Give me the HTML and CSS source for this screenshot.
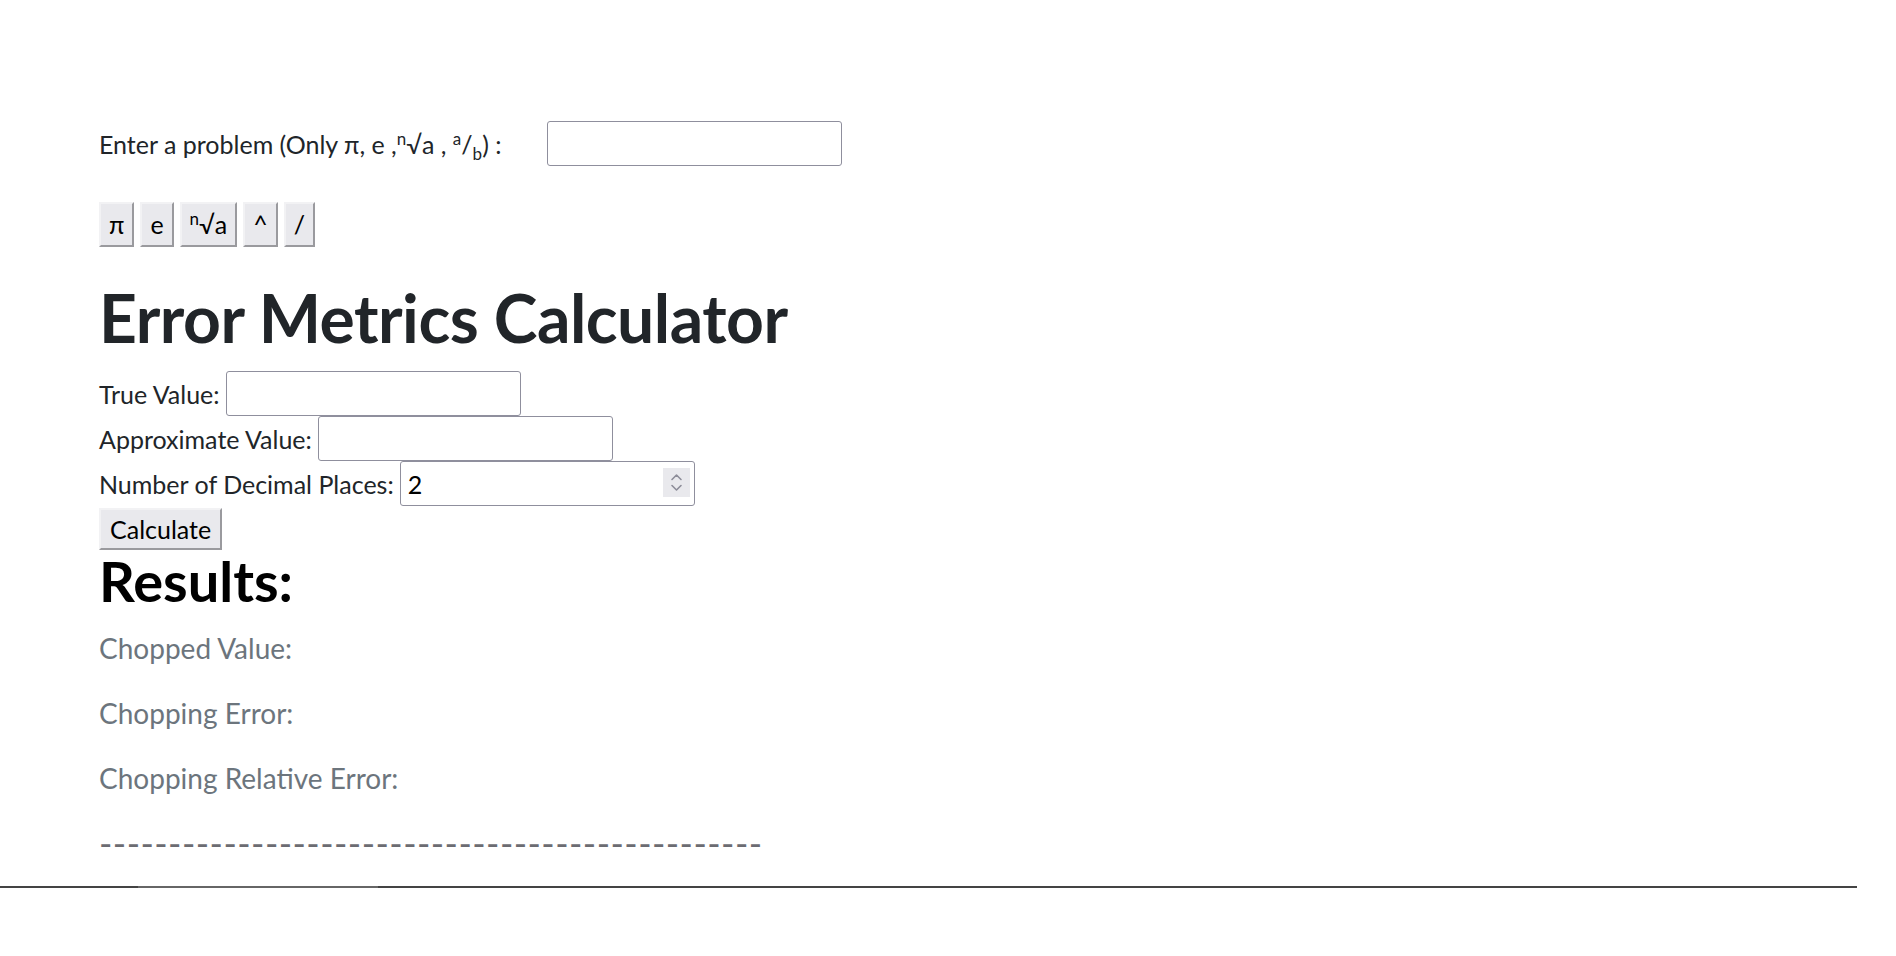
FILE: index.html
```html
<!DOCTYPE html>
<html lang="en">
<head>
<meta charset="utf-8">
<title>Error Metrics Calculator</title>
<link rel="stylesheet" href="styles.css">
</head>
<body>
<div class="page">
  <div class="problem">
    <label class="problem-label" for="problem">Enter a problem (Only π, e ,<sup>n</sup>√a , <sup>a</sup>/<sub>b</sub>) :</label>
    <input class="inp" id="problem" type="text">
  </div>
  <div class="keys">
    <button class="key">π</button>
    <button class="key">e</button>
    <button class="key"><sup>n</sup>√a</button>
    <button class="key">^</button>
    <button class="key">/</button>
  </div>
  <h1 class="title">Error Metrics Calculator</h1>
  <div class="row">
    <label for="tv">True Value:</label>
    <input class="inp" id="tv" type="text">
  </div>
  <div class="row">
    <label for="av">Approximate Value:</label>
    <input class="inp" id="av" type="text">
  </div>
  <div class="row">
    <label for="dp">Number of Decimal Places:</label>
    <span class="num-wrap">
      <input class="inp num" id="dp" type="number" value="2">
      <span class="spin">
        <svg width="27" height="29" viewBox="0 0 27 29">
          <path d="M9 11.5 L13.5 7 L18 11.5" fill="none" stroke="#8d8d99" stroke-width="1.6" stroke-linecap="round" stroke-linejoin="round"/>
          <path d="M9 17.5 L13.5 22 L18 17.5" fill="none" stroke="#8d8d99" stroke-width="1.6" stroke-linecap="round" stroke-linejoin="round"/>
        </svg>
      </span>
    </span>
  </div>
  <button class="key calc">Calculate</button>
  <h2 class="results-title">Results:</h2>
  <div class="results">
    <p class="res">Chopped Value:</p>
    <p class="res">Chopping Error:</p>
    <p class="res">Chopping Relative Error:</p>
    <p class="res dashes">------------------------------------------------</p>
  </div>
</div>
<div class="bar">
  <span class="bar-a"></span>
  <span class="bar-b"></span>
  <span class="bar-c"></span>
</div>
</body>
</html>
```
FILE: styles.css
```css
html, body {
  margin: 0;
  padding: 0;
  background: #ffffff;
}

body {
  font-family: Lato, "Noto Sans", "DejaVu Sans", sans-serif;
  color: #212529;
}

.page {
  padding: 121px 0 0 99px;
}

.problem {
  display: flex;
  align-items: center;
  height: 45px;
  font-size: 25px;
}

.problem-label {
  margin-right: 46px;
}

sup, sub {
  font-size: 0.68em;
  line-height: 0;
}

.inp {
  box-sizing: border-box;
  width: 295px;
  height: 45px;
  margin: 0;
  border: 1px solid #8f8f9d;
  border-radius: 3px;
  padding: 0 7px;
  font-family: Lato, "Noto Sans", sans-serif;
  font-size: 25px;
  color: #000;
  background: #fff;
}

.keys {
  display: flex;
  gap: 6px;
  margin-top: 36px;
}

.key {
  margin: 0;
  font-family: Lato, "Noto Sans", "DejaVu Sans", sans-serif;
  font-size: 25px;
  line-height: 31px;
  padding: 5px 8px;
  border: 2px solid;
  border-color: #f2f2f4 #9a9a9e #9a9a9e #f2f2f4;
  border-radius: 0;
  background: #e9e9ed;
  color: #000;
}

.title {
  margin: 30px 0 12px;
  font-size: 66px;
  letter-spacing: -0.5px;
  line-height: 82px;
  font-weight: 700;
  color: #212529;
}

.row {
  display: flex;
  align-items: center;
  gap: 6px;
  height: 45px;
  font-size: 25px;
}

.num-wrap {
  position: relative;
  display: inline-block;
  height: 45px;
}

.num {
  -moz-appearance: textfield;
  appearance: textfield;
}

.num::-webkit-inner-spin-button,
.num::-webkit-outer-spin-button {
  -webkit-appearance: none;
  margin: 0;
}

.spin {
  position: absolute;
  top: 7px;
  right: 5px;
  width: 27px;
  height: 29px;
  background: #e9e9ed;
  display: flex;
}

.calc {
  margin-top: 2px;
  line-height: 28px;
  padding: 5px 9px;
}

.results-title {
  margin: 0;
  font-size: 56px;
  line-height: 1.1;
  font-weight: 700;
  color: #000;
}

.results {
  display: flex;
  flex-direction: column;
  gap: 32px;
  margin-top: 20px;
}

.res {
  margin: 0;
  font-size: 28px;
  line-height: 33px;
  color: #6c757d;
}

.dashes {
  font-size: 36px;
  letter-spacing: 0.45px;
  color: #6c6c72;
  white-space: nowrap;
}

.bar {
  display: flex;
  width: 1857px;
  height: 2px;
  margin-top: 26px;
}

.bar-a {
  width: 138px;
  background: #444;
}

.bar-b {
  width: 240px;
  background: #666;
}

.bar-c {
  flex: 1;
  background: #444;
}
```
